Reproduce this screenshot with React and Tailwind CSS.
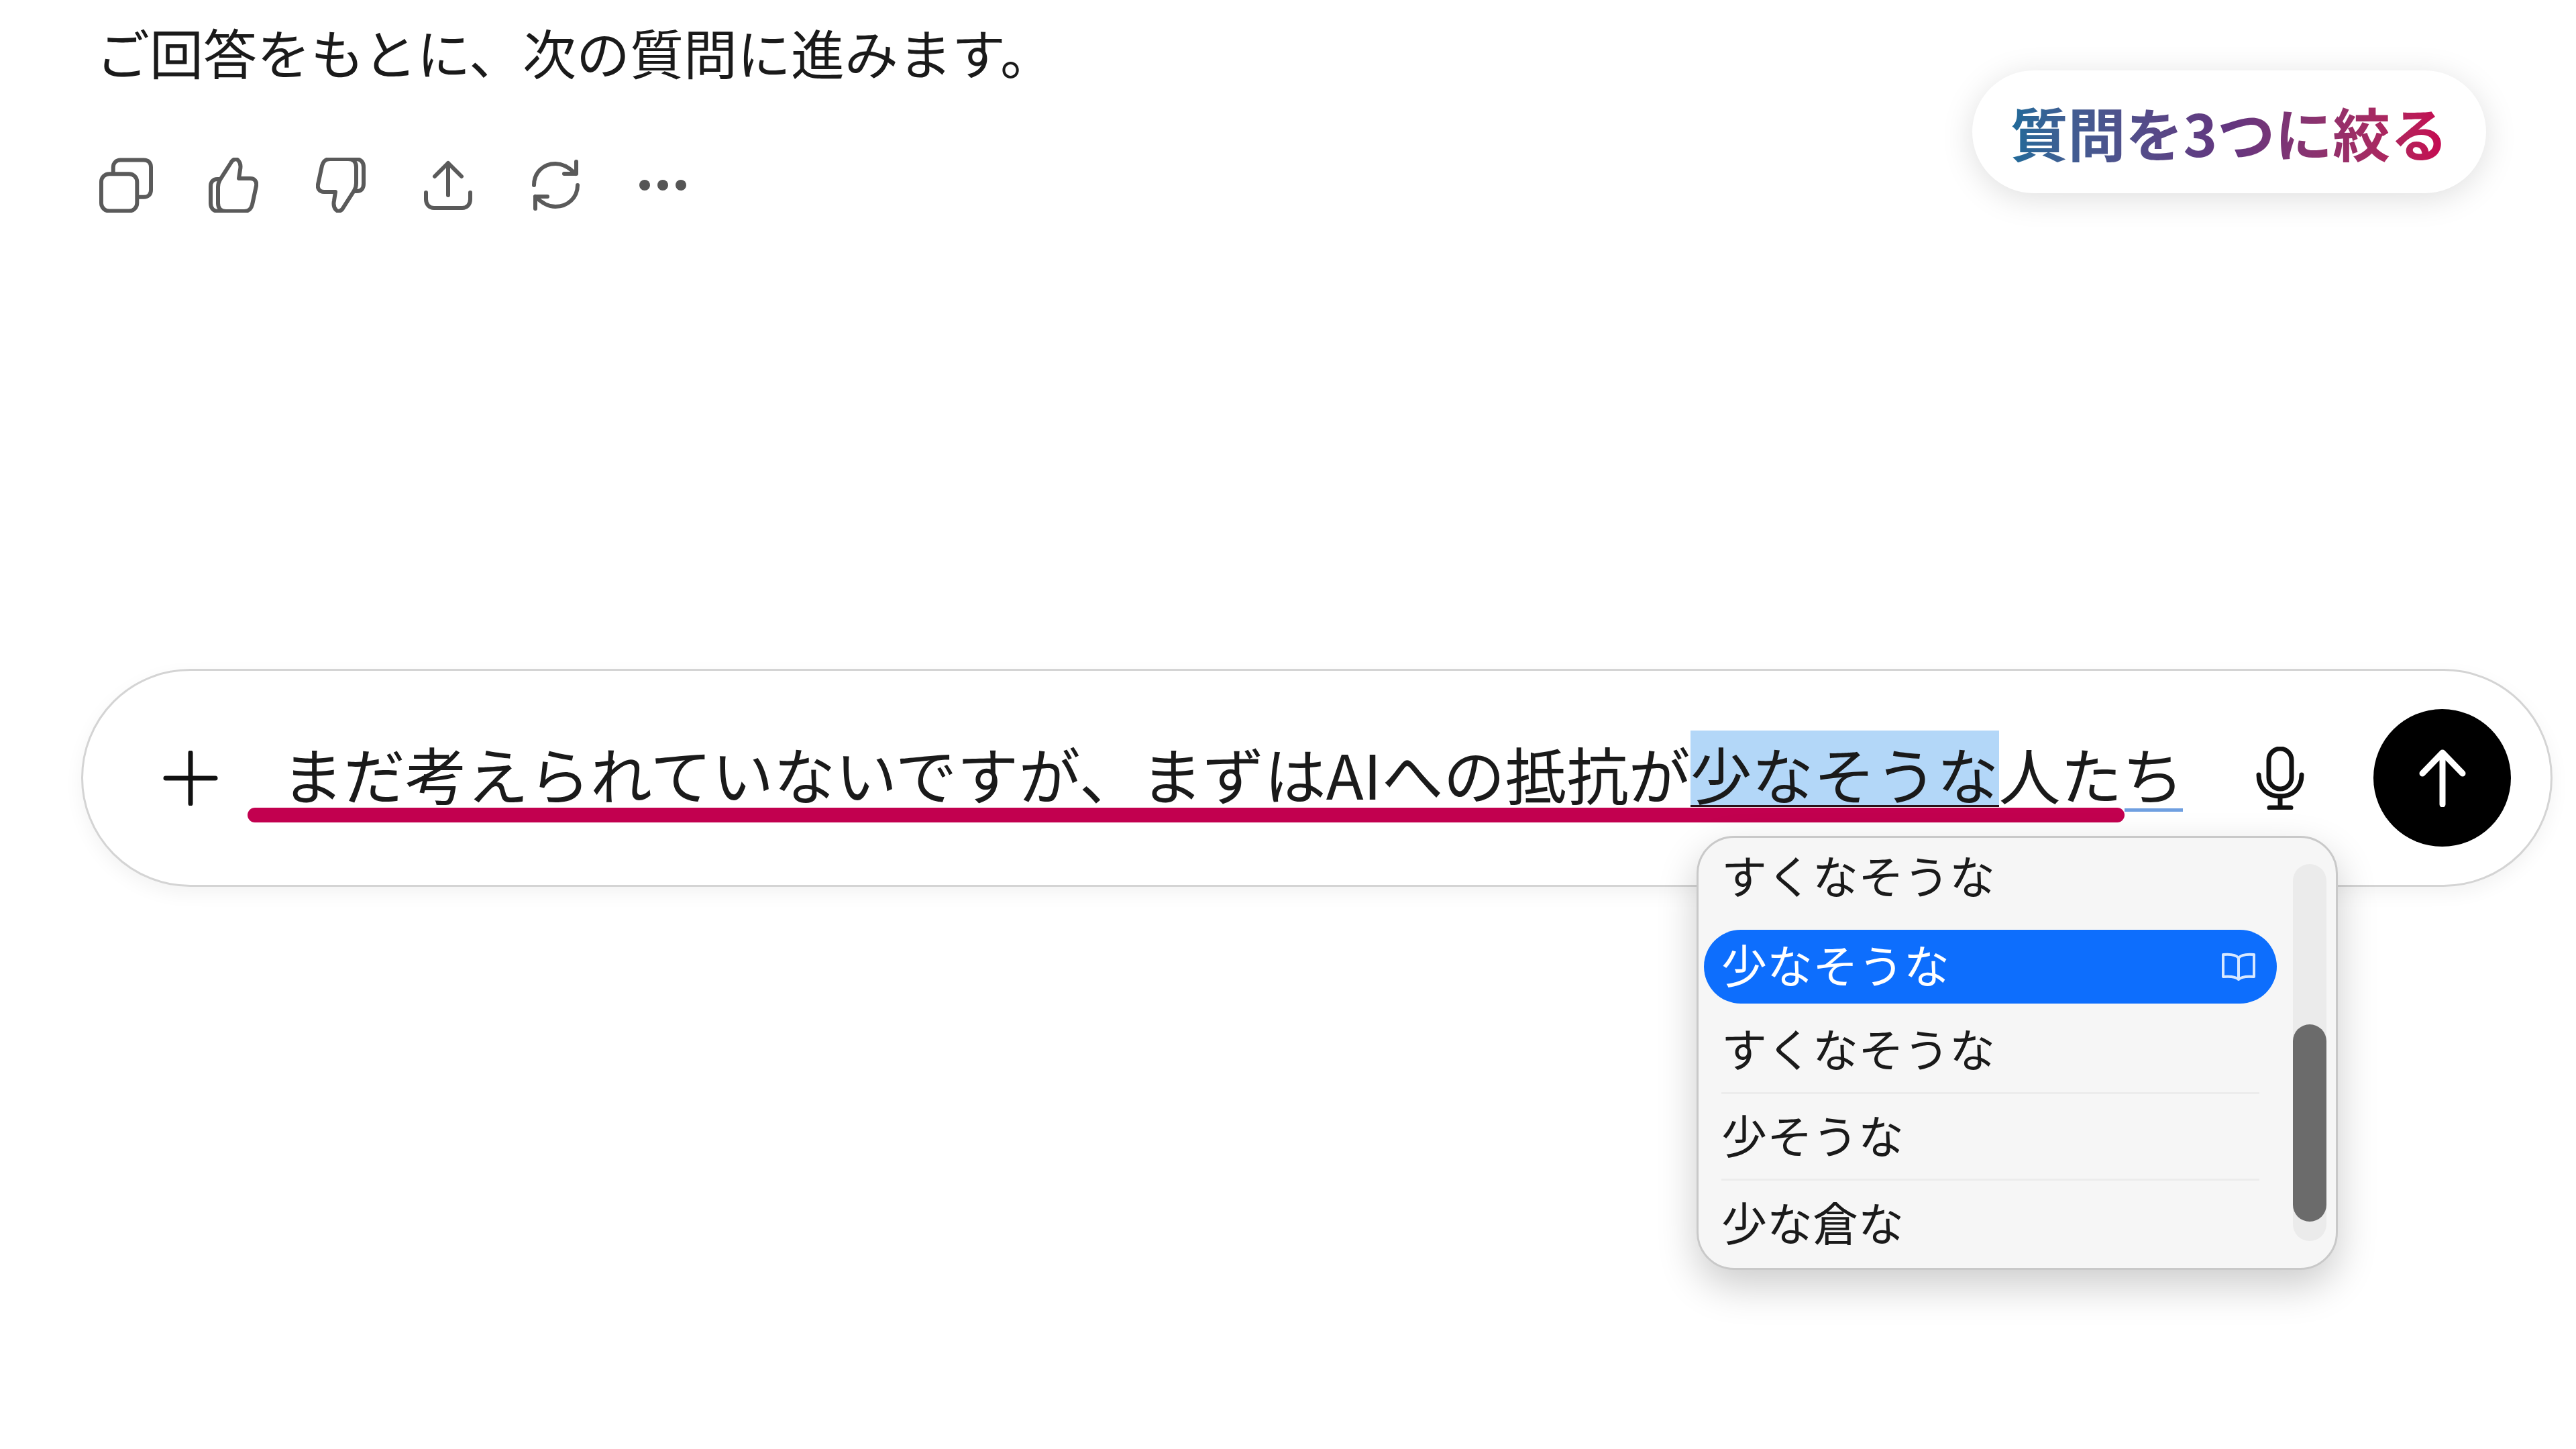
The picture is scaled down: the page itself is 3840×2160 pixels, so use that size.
import React from 'react';

function CopyIcon() {
  return (
    <svg width="81" height="82" viewBox="0 0 81 82" fill="none" stroke="#5a5a5a" strokeWidth="6" strokeLinecap="round" strokeLinejoin="round">
      <rect x="3" y="24" width="54" height="56" rx="12" />
      <path d="M21 23V14C21 7 26 3 32 3H67C74 3 78 7 78 14V48C78 55 74 59 67 59H58" />
    </svg>
  );
}

function ThumbIcon({ down }) {
  return (
    <svg width="74" height="82" viewBox="0 0 74 82" fill="none" stroke="#5a5a5a" strokeWidth="6" strokeLinecap="round" strokeLinejoin="round" className={down ? 'rotate-180' : ''}>
      <path d="M17 33L33 8C36 2 41 1 44 4C48 8 48 13 47 18L45 31H62C69 31 72 36 71 42L65 70C63 77 60 80 53 80H26C18 80 14 75 14 68V44C14 39 15 36 17 33Z" />
      <path d="M17 32H13C6 32 3 37 3 43V68C3 76 8 80 15 80H26" />
    </svg>
  );
}

function ShareIcon() {
  return (
    <svg width="72" height="74" viewBox="0 0 72 74" fill="none" stroke="#5a5a5a" strokeWidth="6" strokeLinecap="round" strokeLinejoin="round">
      <path d="M36 52V4M16 24L36 4L56 24" />
      <path d="M3 48V58C3 66 8 71 15 71H57C64 71 69 66 69 58V48" />
    </svg>
  );
}

function RefreshIcon() {
  return (
    <svg width="72" height="76" viewBox="0 0 72 76" fill="none" stroke="#5a5a5a" strokeWidth="6" strokeLinecap="round" strokeLinejoin="round">
      <path d="M4 38C4 19 18 6 36 6C47 6 56 11 66 21" />
      <path d="M67 3V21H49" />
      <path d="M69 38C69 57 54 70 36 70C25 70 16 65 6 55" />
      <path d="M6 73V55H24" />
    </svg>
  );
}

function MicIcon() {
  return (
    <svg width="72" height="94" viewBox="0 0 72 94" fill="none" stroke="#111" strokeWidth="7" strokeLinecap="round" strokeLinejoin="round">
      <rect x="19" y="3" width="34" height="60" rx="17" />
      <path d="M4 42C4 62 17 74 36 74C55 74 68 62 68 42" />
      <path d="M36 74V90M20 91H52" />
    </svg>
  );
}

function BookIcon() {
  return (
    <svg width="54" height="42" viewBox="0 0 54 42" fill="none" stroke="#d7e8ff" strokeWidth="4" strokeLinejoin="round">
      <path d="M27 8C23 3 15 2 4 3V36C15 35 23 36 27 40C31 36 39 35 50 36V3C39 2 31 3 27 8Z" />
      <path d="M27 8V40" />
    </svg>
  );
}

const ICON_BOX = 'flex h-[82px] w-[80px] items-center justify-center';

export default function App() {
  return (
    <div className="h-[2160px] w-[3840px] overflow-hidden bg-white font-['Noto_Sans_CJK_JP',sans-serif] text-[#1a1a1a]">
      <div className="flex items-start justify-between pl-[148px] pr-[134px]">
        <div className="pt-[28px]">
          <p className="-ml-[5px] text-[80px] leading-[96px] font-normal">ご回答をもとに、次の質問に進みます。</p>
          <div className="mt-[111px] flex items-center gap-[80px]">
            <div className={ICON_BOX}><CopyIcon /></div>
            <div className={ICON_BOX}><ThumbIcon /></div>
            <div className={ICON_BOX}><ThumbIcon down /></div>
            <div className={ICON_BOX}><ShareIcon /></div>
            <div className={ICON_BOX}><RefreshIcon /></div>
            <div className={`${ICON_BOX} gap-[11px]`}>
              <span className="h-[16px] w-[16px] rounded-full bg-[#555]" />
              <span className="h-[16px] w-[16px] rounded-full bg-[#555]" />
              <span className="h-[16px] w-[16px] rounded-full bg-[#555]" />
            </div>
          </div>
        </div>
        <div className="mt-[105px] flex h-[183px] w-[766px] items-center justify-center rounded-full bg-white shadow-[0_8px_48px_rgba(0,0,0,0.13)]">
          <span className="bg-linear-to-r from-[#1f6a99] via-[#63357f] to-[#c8004f] bg-clip-text text-[86px] leading-[100px] font-bold text-transparent">
            質問を3つに絞る
          </span>
        </div>
      </div>

      <div className="relative mt-[680px] ml-[121px] flex h-[325px] w-[3684px] items-center rounded-full border-[3px] border-[#d4d4d4] bg-white pr-[59px] pl-[119px] shadow-[0_10px_28px_rgba(0,0,0,0.05)]">
        <svg width="82" height="82" viewBox="0 0 82 82" fill="none" stroke="#111" strokeWidth="7" strokeLinecap="round" className="shrink-0">
          <path d="M41 3V79M4 41H78" />
        </svg>
        <div className="mb-[28px] ml-[95px] flex text-[92px] leading-[126px] font-normal whitespace-nowrap">
          <span className="h-[114px]">まだ考えられていないですが、まずはAIへの抵抗が</span>
          <span className="h-[114px] border-b-[3px] border-[#2a1018] bg-[#b3d7f8]">少なそうな</span>
          <span className="h-[114px]">人たち</span>
        </div>
        <div className="ml-auto shrink-0"><MicIcon /></div>
        <div className="ml-[103px] flex h-[205px] w-[205px] shrink-0 items-center justify-center rounded-full bg-black">
          <svg width="76" height="86" viewBox="0 0 76 86" fill="none" stroke="#fff" strokeWidth="9" strokeLinecap="round" strokeLinejoin="round">
            <path d="M38 82V5M8 36L38 5L68 36" />
          </svg>
        </div>

        <div className="absolute top-[204px] left-[245px] h-[22px] w-[2798px] rounded-full bg-[#c2004f]" />
        <div className="absolute top-[205px] left-[3043px] h-[5px] w-[87px] bg-[#6f9fe0]" />

        <div className="absolute top-[246px] left-[2405px] z-10 flex h-[647px] w-[956px] rounded-[56px] border-[3px] border-[#c9c9c9] bg-[#f6f6f6] text-[68px] shadow-[0_24px_60px_rgba(0,0,0,0.2)]">
          <div className="w-[854px] pt-[4px] pl-[8px] box-content">
            <div className="flex h-[110px] items-center px-[26px] pb-[8px]">すくなそうな</div>
            <div className="mt-[23px] flex h-[110px] items-center justify-between rounded-full bg-[#0d6efd] pr-[30px] pl-[26px] text-white">
              <span className="pb-[8px]">少なそうな</span>
              <BookIcon />
            </div>
            <div className="mx-[26px] flex h-[135px] items-center border-b-[3px] border-[#ececec]">すくなそうな</div>
            <div className="mx-[26px] flex h-[129px] items-center border-b-[3px] border-[#ececec] pb-[6px]">少そうな</div>
            <div className="mx-[26px] flex h-[129px] items-center pb-[8px]">少な倉な</div>
          </div>
          <div className="mt-[39px] ml-[24px] h-[562px] w-[50px] rounded-full bg-[#ebebeb] pt-[239px]">
            <div className="h-[294px] w-[50px] rounded-full bg-[#6b6b6b]" />
          </div>
        </div>
      </div>
    </div>
  );
}
